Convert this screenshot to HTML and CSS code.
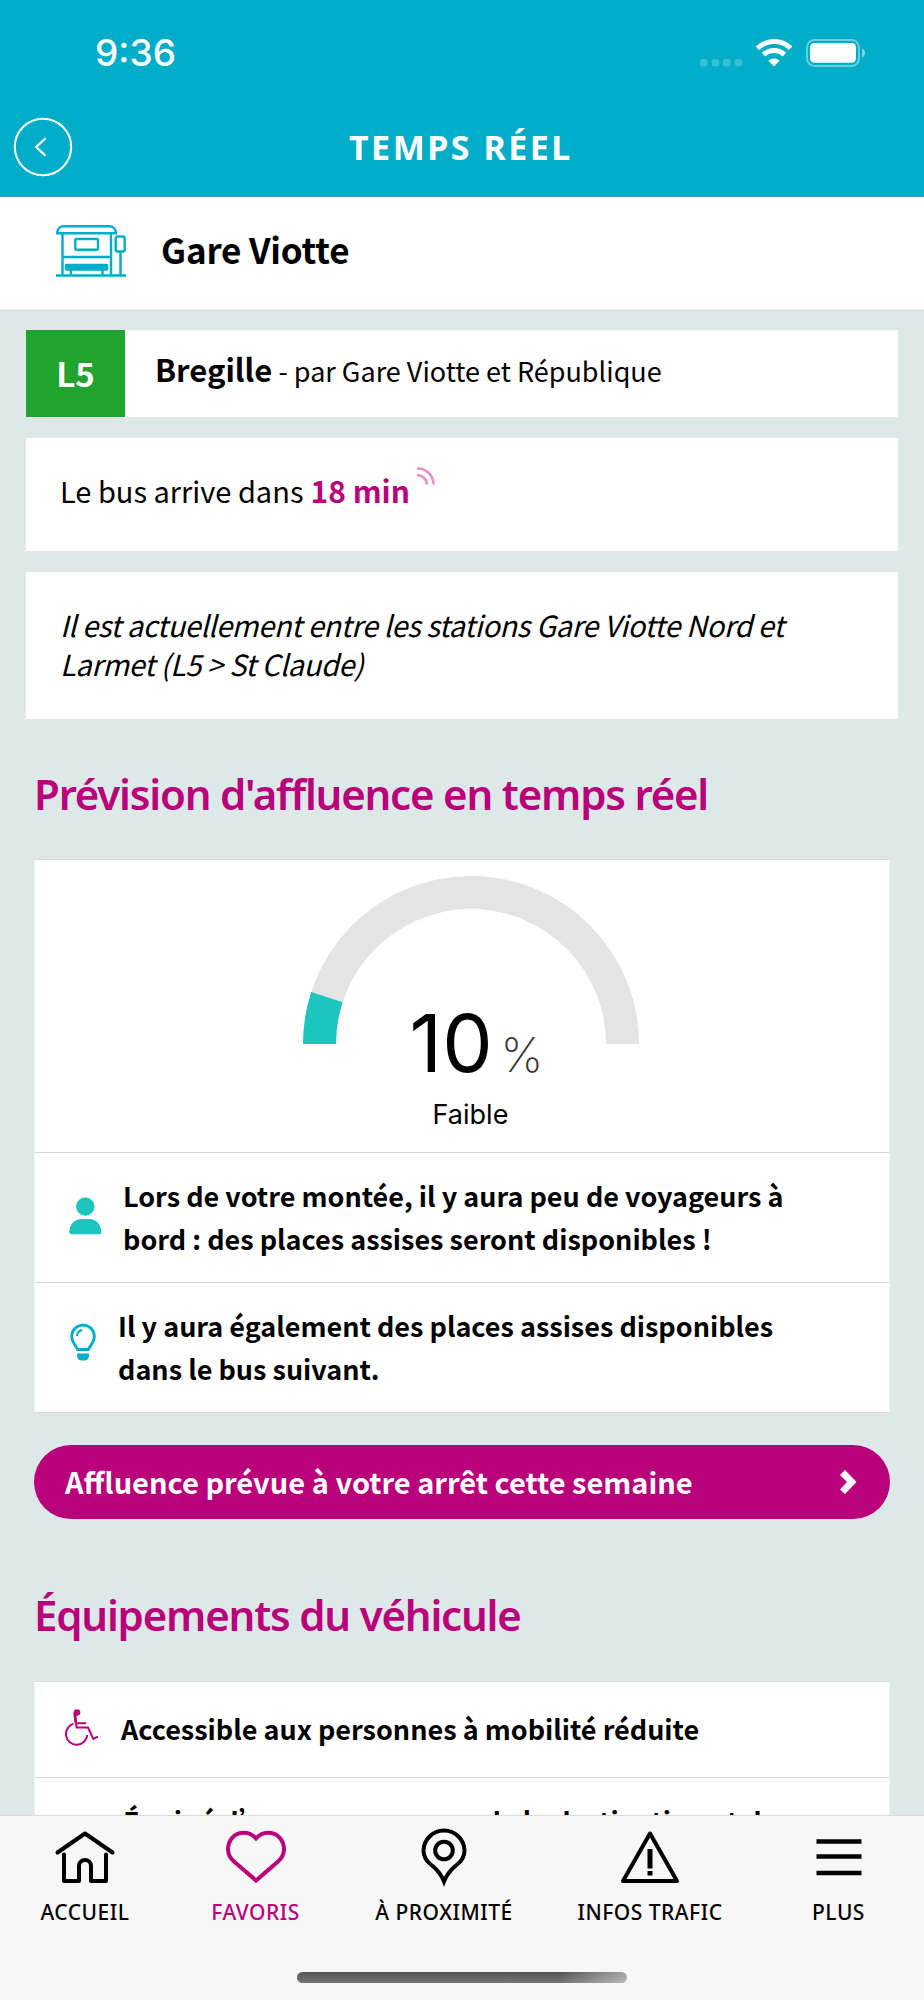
FILE: index.html
```html
<!DOCTYPE html>
<html lang="fr">
<head>
    <meta charset="UTF-8">
    <title>Temps réel</title>
    <meta name="viewport" content="width=device-width, initial-scale=1.0">
    <link rel="stylesheet" href="styles.css">
</head>
<body>
<header class="header">
    <div class="status-bar">
        <span class="time">9:36</span>
        <svg class="status-icons" width="166" height="30" viewBox="0 0 166 30">
            <g fill="#fff" fill-opacity="0.22">
                <rect x="0" y="21" width="7.5" height="7.5" rx="2.5"/>
                <rect x="11.7" y="21" width="7.5" height="7.5" rx="2.5"/>
                <rect x="23" y="21" width="7.5" height="7.5" rx="2.5"/>
                <rect x="34.6" y="21" width="7.5" height="7.5" rx="2.5"/>
            </g>
            <g fill="none" stroke="#fff" stroke-width="5">
                <path d="M57.4 10.2a24 24 0 0 1 33.2 0"/>
                <path d="M63.6 16.6a15 15 0 0 1 20.8 0"/>
            </g>
            <path d="M74 28.6l-5.6-5.9a8.4 8.4 0 0 1 11.2 0z" fill="#fff"/>
            <rect x="107" y="2" width="52" height="26" rx="7.5" fill="none" stroke="#fff" stroke-opacity="0.4" stroke-width="2"/>
            <rect x="110" y="5" width="46" height="19.8" rx="4.5" fill="#fff"/>
            <path d="M162 10.5c4 1.5 4 7.500 0 9z" fill="#fff" fill-opacity="0.5"/>
        </svg>
    </div>
    <div class="nav-bar">
        <svg class="back" width="60" height="60" viewBox="0 0 60 60" fill="none" stroke="#fff">
            <circle cx="30" cy="30" r="28.200" stroke-width="2"/>
            <path d="M32.500 21.300l-9.300 8.700 9.300 8.700" stroke-width="2.200"/>
        </svg>
        <h1>TEMPS RÉEL</h1>
    </div>
</header>

<div class="station">
    <svg width="70" height="52" viewBox="0 0 70 52" fill="none" stroke="#00adc8" stroke-width="2.400">
        <path d="M1.200 8.200C1.200 4 4 1.200 8 1.200h45c4 0 7 2.800 7 7z"/>
        <path d="M6.500 8.500V50M55 8.500V50M6.500 32H55"/>
        <rect x="19.300" y="14" width="22.700" height="10.800" rx="1"/>
        <rect x="59.700" y="11.500" width="9" height="15" rx="2"/>
        <path d="M64.500 27V50M0 50.500h70"/>
        <rect x="9.500" y="39.500" width="42" height="5.500" rx="1" fill="#00adc8" stroke-width="1.500"/>
        <path d="M15 45v5M46.500 45v5"/>
    </svg>
    <span>Gare Viotte</span>
</div>

<main class="content">
    <div class="line">
        <div class="line-number">L5</div>
        <div class="line-direction"><b>Bregille</b> - par Gare Viotte et République</div>
    </div>

    <div class="arrival">
        <span>Le bus arrive dans</span>
        <b>18 min</b>
        <svg width="20" height="20" viewBox="0 0 20 20" fill="none" stroke="#e391ca" stroke-width="2.600" stroke-linecap="round">
            <path d="M2 2.500c8 0 15 6.500 15.500 15M2 9.300c4.500 0 8.300 3.700 8.800 8.200"/>
        </svg>
    </div>

    <div class="location">
        <div>Il est actuellement entre les stations Gare Viotte Nord et</div>
        <div>Larmet (L5 &gt; St Claude)</div>
    </div>

    <!-- Crowding forecast -->
    <h2 class="title-forecast">Prévision d'affluence en temps réel</h2>
    <div class="card">
        <div class="gauge">
            <svg width="336" height="169" viewBox="0 0 336 169" fill="none" stroke-width="33">
                <path d="M16.500 169A151.500 151.500 0 0 1 319.500 169" stroke="#e4e4e4"/>
                <path d="M16.500 169A151.500 151.500 0 0 1 23.900 122.200" stroke="#1cc5be"/>
            </svg>
            <div class="gauge-value">10<span>%</span></div>
            <div class="gauge-label">Faible</div>
        </div>
        <div class="row">
            <svg class="icon-person" width="33" height="38" viewBox="0 0 33 38" fill="#1cc5be">
                <circle cx="16.300" cy="9.500" r="9.200"/>
                <path d="M0.300 35.500C0.300 27 6 22 12.500 22h7.500C27 22 32.300 27 32.300 35.500q0 1.700-1.700 1.700H2q-1.700 0-1.700-1.700z"/>
            </svg>
            <p>Lors de votre montée, il y aura peu de voyageurs à<br>bord : des places assises seront disponibles !</p>
        </div>
        <div class="row">
            <svg class="icon-bulb" width="26" height="38" viewBox="0 0 26 38" fill="none" stroke="#00adc8">
                <path d="M7.700 26.500L3.600 19.700A11.300 11.300 0 1 1 22.400 19.700L18.300 26.500z" stroke-width="2.900"/>
                <path d="M7 13q0-5 5.300-6" stroke-width="1.900"/>
                <path d="M7 30.500h12v2q-.5 5-4.500 5h-3q-4 0-4.500-5z" fill="#00adc8" stroke="none"/>
            </svg>
            <p>Il y aura également des places assises disponibles<br>dans le bus suivant.</p>
        </div>
    </div>
    <div class="button">
        <span>Affluence prévue à votre arrêt cette semaine</span>
        <svg width="18" height="26" viewBox="0 0 18 26" fill="#fff">
            <path d="M1 6L6 1 17.500 13 6 25 1 20.500 8 13z"/>
        </svg>
    </div>

    <!-- Vehicle equipment -->
    <h2 class="title-equipment">Équipements du véhicule</h2>
    <div class="card">
        <div class="row row-equipment">
            <svg class="icon-wheelchair" width="34" height="37" viewBox="0 0 34 37" fill="none" stroke="#b9007a" stroke-width="2">
                <circle cx="12" cy="3.500" r="3.300" fill="#b9007a" stroke="none"/>
                <path d="M9.800 3l1.800 15.500H23L28.300 30l4.700-2.300M10.800 14.200h10.400"/>
                <path d="M8.500 14.800A10.700 10.700 0 1 0 22.300 26"/>
                <path d="M9.600 4l1.200 10" stroke-width="2.600"/>
            </svg>
            <p>Accessible aux personnes à mobilité réduite</p>
        </div>
        <div class="row row-announce">
            <p>Équipé d’annonce sonore de la destination et des</p>
        </div>
    </div>
</main>

<nav class="tab-bar">
    <div class="tabs">
        <div class="tab">
            <svg width="62" height="60" viewBox="0 0 62 60" fill="none" stroke="#000" stroke-width="4" stroke-linecap="round" stroke-linejoin="round">
                <path d="M3.500 25.500L31 6.500 58.500 25.500M10 27.500V54H25V39a6 6 0 0 1 12 0V54H52V27.500"/>
            </svg>
            <span>ACCUEIL</span>
        </div>
        <div class="tab active">
            <svg width="62" height="60" viewBox="0 0 62 60" fill="none" stroke="#b9007a" stroke-width="4">
                <path d="M31 53.500L9 34.500C4 30 3 26.500 3 22.500C3 13 9.500 5.700 19 5.700c5 0 9 2.300 12 5.800c3-3.500 7-5.800 12-5.800C52.500 5.700 59 13 59 22.500c0 4-1 7.500-6 12z"/>
            </svg>
            <span>FAVORIS</span>
        </div>
        <div class="tab">
            <svg width="62" height="60" viewBox="0 0 62 60" fill="none" stroke="#000" stroke-width="4">
                <path d="M31 54.500C28 47 24 42.500 19 38.500C13 34 10.500 29.500 10.500 24a20.500 20.500 0 0 1 41 0C51.500 29.500 49 34 43 38.500C38 42.500 34 47 31 54.500z"/>
                <circle cx="31" cy="23.500" r="8.800"/>
            </svg>
            <span>À PROXIMITÉ</span>
        </div>
        <div class="tab">
            <svg width="62" height="60" viewBox="0 0 62 60" fill="none" stroke="#000" stroke-width="4" stroke-linejoin="round">
                <path d="M31 6.500L58 54H4z"/>
                <path d="M31 22v19.500M31 44v4.500" stroke-width="5"/>
            </svg>
            <span>INFOS TRAFIC</span>
        </div>
        <div class="tab">
            <svg width="62" height="60" viewBox="0 0 62 60" fill="none" stroke="#000" stroke-width="4.500">
                <path d="M8.500 14.500h45M8.500 29.500h45M8.500 46h45"/>
            </svg>
            <span>PLUS</span>
        </div>
    </div>
    <div class="home-indicator"></div>
</nav>
</body>
</html>
```
FILE: styles.css
```css
* {
    box-sizing: border-box;
}
body {
    margin: 0;
    width: 924px;
    height: 2000px;
    overflow: hidden;
    display: flex;
    flex-direction: column;
    background-color: #dde8e8;
    color: #000;
    font-family: "Noto Sans CJK SC", sans-serif;
}
h1, h2, p {
    margin: 0;
}
svg {
    display: block;
    flex-shrink: 0;
}
.header {
    height: 197px;
    flex-shrink: 0;
    background-color: #00adc8;
    border-bottom: 1px solid #3ba0b3;
    color: #fff;
}
.status-bar {
    display: flex;
    align-items: center;
    justify-content: space-between;
    height: 96px;
    padding: 9px 58px 0 95px;
}
.time {
    font-family: Inter, sans-serif;
    font-size: 37px;
    font-weight: 500;
}
.nav-bar {
    display: flex;
    align-items: center;
    height: 101px;
    padding-left: 13px;
}
.nav-bar h1 {
    margin-left: 276px;
    font-family: "Noto Sans", sans-serif;
    font-size: 34px;
    font-weight: 700;
    letter-spacing: 2.5px;
}
.station {
    display: flex;
    align-items: center;
    gap: 35px;
    height: 112px;
    flex-shrink: 0;
    padding: 0 56px 4px;
    background-color: #fff;
    font-size: 35px;
    font-weight: 700;
    letter-spacing: -0.2px;
}
.station span {
    line-height: 50px;
    margin-top: -4px;
}
.content {
    flex: 1;
    min-height: 0;
    overflow: hidden;
}
.line {
    display: flex;
    height: 87px;
    margin: 21px 26px;
    background-color: #fff;
}
.line-number {
    width: 99px;
    background-color: #21a32f;
    color: #fff;
    font-size: 33px;
    font-weight: 700;
    line-height: 87px;
    text-align: center;
}
.line-direction {
    padding: 21px 30px;
    font-size: 27px;
    line-height: 40px;
    white-space: nowrap;
}
.line-direction b {
    font-size: 31px;
    line-height: 1;
}
.arrival {
    display: flex;
    height: 113px;
    margin: 0 26px 21px;
    padding: 33px 34px;
    background-color: #fff;
    font-size: 29px;
    line-height: 38px;
}
.arrival b {
    margin-left: 7px;
    color: #b9007a;
    font-size: 30px;
}
.arrival svg {
    margin: -5px 0 0 6px;
}
.location {
    height: 147px;
    margin: 0 26px;
    padding: 33px 34px;
    background-color: #fff;
    font-size: 29px;
    font-style: italic;
    line-height: 39px;
    letter-spacing: -0.4px;
    white-space: nowrap;
}
h2 {
    color: #b9007a;
    font-family: "Noto Sans", sans-serif;
    font-size: 42px;
    font-weight: 600;
    line-height: 50px;
    letter-spacing: -1.2px;
    white-space: nowrap;
}
.title-forecast {
    margin: 50px 34px 40px;
}
.title-equipment {
    margin: 71px 34px 41px;
}
.card {
    margin: 0 34px;
    border: 1px solid #d6dada;
    border-left-color: #eef3f3;
    border-right-color: #eef3f3;
    background-color: #fff;
}
.gauge {
    display: flex;
    flex-direction: column;
    align-items: center;
    height: 292px;
    padding: 15px 0 0 17px;
    font-family: Inter, sans-serif;
}
.gauge-value {
    margin: -41px 0 0 12px;
    font-size: 80px;
    line-height: 80px;
}
.gauge-value span {
    margin-left: 8px;
    color: #333;
    font-size: 48px;
    font-weight: 200;
}
.gauge-label {
    margin-top: 0;
    font-size: 27px;
    line-height: 40px;
}
.row {
    display: flex;
    height: 130px;
    padding: 21px 33px 20px;
    border-top: 1px solid #d6d8dc;
    font-size: 27px;
    font-weight: 700;
    line-height: 43px;
    white-space: nowrap;
}
.icon-person {
    margin: 23px 21px 0 1px;
}
.icon-bulb {
    margin: 19px 22px 0 2px;
}
.button {
    display: flex;
    align-items: center;
    justify-content: space-between;
    height: 74px;
    margin: 32px 34px 0;
    padding: 0 33px 0 31px;
    border-radius: 37px;
    background-color: #b9007a;
    color: #fff;
    font-size: 29px;
    font-weight: 700;
    line-height: 70px;
}
.button span {
    margin-top: -3px;
}
.row-equipment {
    height: 95px;
    padding: 25px 30px;
    border-top: none;
}
.icon-wheelchair {
    margin: 2px 22px 0 0;
}
.row-announce {
    padding-left: 88px;
}
.tab-bar {
    height: 185px;
    flex-shrink: 0;
    border-top: 1px solid #d9dada;
    background-color: #f7f7f7;
}
.tabs {
    display: grid;
    grid-template-columns: 170px 171px 206px 206px 171px;
    height: 156px;
    padding-top: 11px;
}
.tab {
    display: flex;
    flex-direction: column;
    align-items: center;
    font-family: "Noto Sans", sans-serif;
    font-size: 21px;
    font-weight: 500;
    line-height: 30px;
    letter-spacing: 0.5px;
    white-space: nowrap;
}
.tab span {
    margin-top: 10px;
}
.active {
    color: #b9007a;
}
.home-indicator {
    width: 330px;
    height: 11px;
    margin: 0 auto;
    border-radius: 6px;
    background: linear-gradient(100deg, rgba(247, 247, 247, 0) 80%, rgba(247, 247, 247, 0.5)), linear-gradient(#555, #777);
}
```
